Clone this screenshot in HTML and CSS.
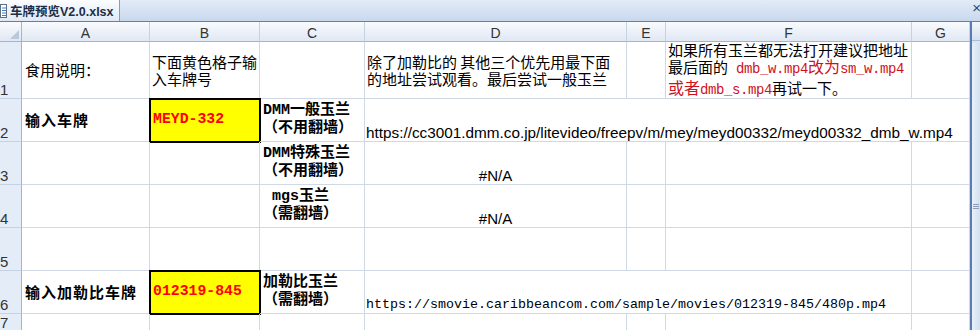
FILE: index.html
```html
<!DOCTYPE html>
<html>
<head>
    <meta charset="utf-8">
    <title>车牌预览V2.0.xlsx</title>
    <link rel="stylesheet" href="styles.css">
</head>
<body>
    <div class="tab-bar">
        <div class="tab">
            <svg class="file-icon" width="7" height="14" viewBox="0 0 7 14">
                <rect x="0.5" y="0.5" width="6" height="13" fill="#fff" stroke="#5d6f88"/>
                <path d="M2 4h4M2 6.5h4M2 9h4M2 11.5h4" stroke="#4a78b8" stroke-width="1"/>
            </svg>
            <span>车牌预览V2.0.xlsx</span>
        </div>
        <span class="close">×</span>
    </div>

    <div class="sheet-area">
        <div class="sheet">
            <!-- 列标题 -->
            <div class="corner">
                <svg width="9" height="9" viewBox="0 0 9 9"><path d="M9 0V9H0Z" fill="#b9c9dc"/></svg>
            </div>
            <div class="col-head">A</div>
            <div class="col-head">B</div>
            <div class="col-head">C</div>
            <div class="col-head">D</div>
            <div class="col-head">E</div>
            <div class="col-head">F</div>
            <div class="col-head">G</div>

            <!-- 第1行 说明 -->
            <div class="row-head">1</div>
            <div class="cell col-a">食用说明：</div>
            <div class="cell"><div>下面黄色格子输<br>入车牌号</div></div>
            <div class="cell"></div>
            <div class="cell"><div>除了加勒比的 其他三个优先用最下面<br>的地址尝试观看。最后尝试一般玉兰</div></div>
            <div class="cell"></div>
            <div class="cell f-note">
                <div>如果所有玉兰都无法打开建议把地址<br>最后面的<span class="red mono"> dmb_w.mp4</span><span class="red">改为</span><span class="red mono">sm_w.mp4</span><br><span class="red">或者</span><span class="red mono">dmb_s.mp4</span>再试一下。</div>
            </div>
            <div class="cell"></div>

            <!-- 第2行 -->
            <div class="row-head">2</div>
            <div class="cell col-a label">输入车牌</div>
            <div class="cell plate">MEYD-332</div>
            <div class="cell engine"><div>DMM一般玉兰<br>（不用翻墙）</div></div>
            <div class="cell url span-4">https://cc3001.dmm.co.jp/litevideo/freepv/m/mey/meyd00332/meyd00332_dmb_w.mp4</div>

            <!-- 第3行 -->
            <div class="row-head">3</div>
            <div class="cell"></div>
            <div class="cell"></div>
            <div class="cell engine"><div>DMM特殊玉兰<br>（不用翻墙）</div></div>
            <div class="cell na">#N/A</div>
            <div class="cell"></div>
            <div class="cell"></div>
            <div class="cell"></div>

            <!-- 第4行 -->
            <div class="row-head">4</div>
            <div class="cell"></div>
            <div class="cell"></div>
            <div class="cell engine"><div>&nbsp;mgs玉兰<br>（需翻墙）</div></div>
            <div class="cell na">#N/A</div>
            <div class="cell"></div>
            <div class="cell"></div>
            <div class="cell"></div>

            <!-- 第5行 -->
            <div class="row-head">5</div>
            <div class="cell"></div>
            <div class="cell"></div>
            <div class="cell"></div>
            <div class="cell"></div>
            <div class="cell"></div>
            <div class="cell"></div>
            <div class="cell"></div>

            <!-- 第6行 加勒比 -->
            <div class="row-head">6</div>
            <div class="cell col-a label">输入加勒比车牌</div>
            <div class="cell plate">012319-845</div>
            <div class="cell engine"><div>加勒比玉兰<br>（需翻墙）</div></div>
            <div class="cell url url-mono span-3">https://smovie.caribbeancom.com/sample/movies/012319-845/480p.mp4</div>
            <div class="cell"></div>

            <!-- 第7行 -->
            <div class="row-head">7</div>
            <div class="cell"></div>
            <div class="cell"></div>
            <div class="cell"></div>
            <div class="cell"></div>
            <div class="cell"></div>
            <div class="cell"></div>
            <div class="cell"></div>
        </div>

        <div class="vscroll">
            <div class="sb-up"></div>
            <div class="sb-thumb">
                <svg width="6" height="7" viewBox="0 0 6 7"><path d="M0 1.5h6M0 3.5h6M0 5.5h6" stroke="#8a9fbd"/></svg>
            </div>
        </div>
    </div>
</body>
</html>
```

FILE: styles.css
```css
* {
    box-sizing: border-box;
}

body {
    margin: 0;
    width: 980px;
    height: 330px;
    overflow: hidden;
    background: #fff;
    font-family: "Liberation Sans", "Noto Sans CJK SC", sans-serif;
}

/* 工作簿标签栏 */
.tab-bar {
    height: 22px;
    display: flex;
    justify-content: space-between;
    background: linear-gradient(#e2ebf7, #c8d8ed);
    border-bottom: 1px solid #5b7fb6;
}

.tab {
    width: 120px;
    display: flex;
    align-items: center;
    gap: 3px;
    background: linear-gradient(#fbfdff, #dfe9f6);
    border-right: 1px solid #7f9dc9;
    font-size: 12.5px;
    font-weight: bold;
    color: #1d2d44;
}

.file-icon {
    flex: none;
}

.close {
    font-size: 15px;
    line-height: 16px;
    color: #2b4a7a;
    margin-right: -1px;
}

/* 表格区域 */
.sheet-area {
    display: flex;
}

.sheet {
    display: grid;
    grid-template-columns: 22px 128px 110px 105px 262px 39px 246px 58px;
    grid-template-rows: 20px 57px 43px 43px 43px 43px 43px 18px;
}

.corner,
.col-head {
    background: linear-gradient(#f9fbfd, #e0e8f4);
    border-bottom: 1px solid #9eb6ce;
}

.corner {
    display: flex;
    justify-content: flex-end;
    align-items: flex-end;
    padding: 0 2px 2px 0;
    border-right: 1px solid #9eb6ce;
}

.col-head {
    display: flex;
    justify-content: center;
    padding-top: 2px;
    font-size: 14px;
    line-height: 18px;
    color: #333;
    border-right: 1px solid #c5d2e2;
}

.row-head {
    display: flex;
    align-items: flex-end;
    background: #e4ecf7;
    border-right: 1px solid #9eb6ce;
    border-bottom: 1px solid #c5d2e2;
    font-size: 15px;
    line-height: 17px;
    color: #333;
}

/* 单元格 */
.cell {
    display: flex;
    align-items: center;
    min-width: 0;
    padding: 0 2px;
    border-right: 1px solid #d0d7e5;
    border-bottom: 1px solid #d0d7e5;
    white-space: nowrap;
    font-family: "Noto Sans CJK SC", sans-serif;
    font-size: 15px;
    line-height: 17.5px;
    color: #000;
}

.col-a {
    padding-left: 3px;
}

.red {
    color: #d0101c;
    font-size: 16px;
}

.mono {
    font-family: "Liberation Mono", monospace;
    font-size: 14px;
    letter-spacing: -0.4px;
}

.label {
    font-weight: bold;
    letter-spacing: 1px;
}

/* 黄色输入格 */
.plate {
    background: #ff0;
    outline: 2px solid #000;
    outline-offset: -1px;
    padding-left: 3px;
    font-family: "Liberation Mono", monospace;
    font-size: 14.8px;
    font-weight: bold;
    color: #f00;
}

.engine {
    font-family: "Liberation Mono", "Noto Sans CJK SC", monospace;
    font-weight: bold;
    line-height: 18px;
    padding-left: 3px;
}

.url {
    align-items: flex-end;
    padding-left: 1px;
    font-family: "Liberation Sans", sans-serif;
    font-size: 15.3px;
    line-height: 17px;
}

.url-mono {
    font-family: "Liberation Mono", monospace;
    font-size: 13.33px;
}

.span-4 {
    grid-column: span 4;
}

.span-3 {
    grid-column: span 3;
}

.na {
    justify-content: center;
    align-items: flex-end;
    font-family: "Liberation Sans", sans-serif;
    line-height: 17px;
}

/* 右侧滚动条 */
.vscroll {
    width: 10px;
    height: 308px;
    display: flex;
    flex-direction: column;
    border-left: 2px solid #5a7cb3;
    background: #dce6f3;
}

.sb-up {
    height: 19px;
    background: linear-gradient(#f4f7fb, #d5e0ef);
    border-bottom: 1px solid #a9bedb;
}

.sb-thumb {
    flex: 1;
    display: flex;
    justify-content: center;
    align-items: center;
    padding-top: 40px;
    margin-top: 2px;
    background: linear-gradient(90deg, #e9f0f9, #d3dfef);
}
```
